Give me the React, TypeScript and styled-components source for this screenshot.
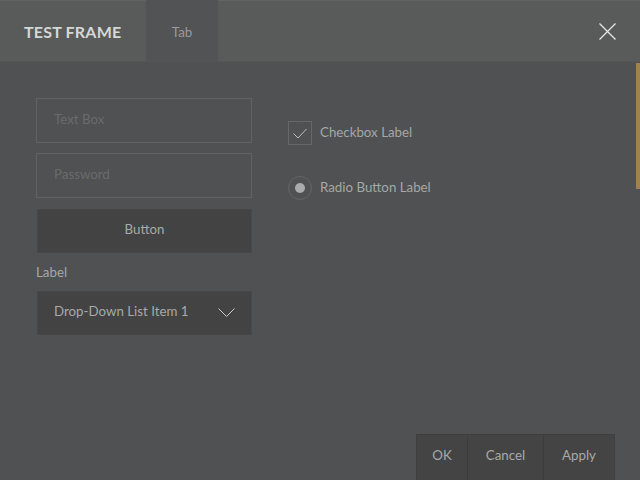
import React from "react";
import styled, { createGlobalStyle } from "styled-components";

const Global = createGlobalStyle`
  html, body { margin: 0; padding: 0; background: #505152; }
  * { box-sizing: border-box; }
`;

const Frame = styled.div`
  width: 640px;
  height: 480px;
  display: flex;
  flex-direction: column;
  background: #505152;
  font-family: Lato, "Open Sans", sans-serif;
  font-size: 13.3px;
  color: #a6a7a7;
  overflow: hidden;
  position: relative;
`;

const Header = styled.div`
  height: 62px;
  display: flex;
  align-items: stretch;
  background: #595b5a;
  border-top: 1px solid #616262;
  border-bottom: 1px solid #545555;
`;

const Title = styled.div`
  width: 146px;
  display: flex;
  align-items: center;
  padding-left: 24px;
  font-weight: 700;
  font-size: 16px;
  color: #d6d7d7;
  letter-spacing: 0.2px;
`;

const Tab = styled.div<{ $active?: boolean }>`
  width: 72px;
  display: flex;
  align-items: center;
  justify-content: center;
  background: ${(p) => (p.$active ? "#525354" : "transparent")};
  color: #9a9b9b;
  margin-top: -1px;
  padding-top: 2px;
`;

const Spacer = styled.div`
  flex: 1;
`;

const Close = styled.div`
  width: 66px;
  display: flex;
  align-items: center;
  justify-content: center;
`;

const Body = styled.div`
  flex: 1;
  display: flex;
  gap: 36px;
  padding: 36px 0 0 36px;
  position: relative;
`;

const Column = styled.div`
  width: 216px;
  display: flex;
  flex-direction: column;
`;

const Input = styled.div`
  height: 45px;
  border: 1px solid #616263;
  display: flex;
  align-items: center;
  padding: 0 0 3px 17px;
  color: #6a6b6c;
  margin-bottom: 10px;
`;

const Button = styled.div`
  height: 44px;
  margin-left: 1px;
  background: #434343;
  border: 1px solid #474848;
  display: flex;
  align-items: center;
  justify-content: center;
  padding-bottom: 5px;
  color: #a8a9a9;
  margin-top: 1px;
`;

const Label = styled.div`
  margin-top: 11px;
  height: 27px;
  line-height: 16px;
`;

const DropDown = styled.div`
  height: 44px;
  margin-left: 1px;
  background: #434343;
  border: 1px solid #474848;
  display: flex;
  align-items: center;
  justify-content: space-between;
  padding: 0 16px 0 16px;
  color: #a8a9a9;
`;

const DropText = styled.span`
  padding-bottom: 5px;
`;

const RightColumn = styled.div`
  display: flex;
  flex-direction: column;
  padding-top: 23px;
  gap: 31px;
`;

const Choice = styled.div`
  display: flex;
  align-items: center;
  gap: 8px;
  height: 24px;
`;

const ChoiceText = styled.span`
  padding-bottom: 2px;
`;

const Box = styled.div`
  width: 24px;
  height: 24px;
  border: 1px solid #666768;
  display: flex;
  align-items: center;
  justify-content: center;
`;

const Radio = styled.div`
  width: 24px;
  height: 24px;
  border-radius: 50%;
  border: 1px solid #646565;
  display: flex;
  align-items: center;
  justify-content: center;
`;

const Dot = styled.div`
  width: 10px;
  height: 10px;
  border-radius: 50%;
  background: #a9aaab;
`;

const Scroll = styled.div`
  position: absolute;
  right: 0;
  top: 1px;
  width: 4px;
  height: 126px;
  background: #a2804f;
`;

const Footer = styled.div`
  position: absolute;
  right: 25px;
  bottom: 0;
  display: flex;
  height: 46px;
  border: 1px solid #3f3f3f;
  border-bottom: none;
  background: #444444;
`;

const FooterButton = styled.div<{ $w: number; $last?: boolean }>`
  width: ${(p) => p.$w}px;
  display: flex;
  align-items: center;
  justify-content: center;
  padding-bottom: 5px;
  color: #a8a9a9;
  border-right: ${(p) => (p.$last ? "none" : "1px solid #3c3c3c")};
`;

export default function App() {
  return (
    <Frame>
      <Global />
      <Header>
        <Title>TEST FRAME</Title>
        <Tab $active>Tab</Tab>
        <Spacer />
        <Close>
          <svg width="17" height="17" viewBox="0 0 17 17">
            <path d="M0.5 0.5 L16.5 16.5 M16.5 0.5 L0.5 16.5" stroke="#e8e8e8" strokeWidth="1.2" fill="none" />
          </svg>
        </Close>
      </Header>
      <Body>
        <Column>
          <Input>Text Box</Input>
          <Input>Password</Input>
          <Button>Button</Button>
          <Label>Label</Label>
          <DropDown>
            <DropText>Drop-Down List Item 1</DropText>
            <svg width="17" height="10" viewBox="0 0 17 10">
              <path d="M0.5 0.5 L8.5 8.5 L16.5 0.5" stroke="#c9caca" strokeWidth="1" fill="none" />
            </svg>
          </DropDown>
        </Column>
        <RightColumn>
          <Choice>
            <Box>
              <svg width="14" height="11" viewBox="0 0 14 11">
                <path d="M0.5 5.5 L5 10 L13.5 1" stroke="#bcbdbd" strokeWidth="1" fill="none" />
              </svg>
            </Box>
            <ChoiceText>Checkbox Label</ChoiceText>
          </Choice>
          <Choice>
            <Radio>
              <Dot />
            </Radio>
            <ChoiceText>Radio Button Label</ChoiceText>
          </Choice>
        </RightColumn>
        <Scroll />
        <Footer>
          <FooterButton $w={51}>OK</FooterButton>
          <FooterButton $w={76}>Cancel</FooterButton>
          <FooterButton $w={70} $last>Apply</FooterButton>
        </Footer>
      </Body>
    </Frame>
  );
}
